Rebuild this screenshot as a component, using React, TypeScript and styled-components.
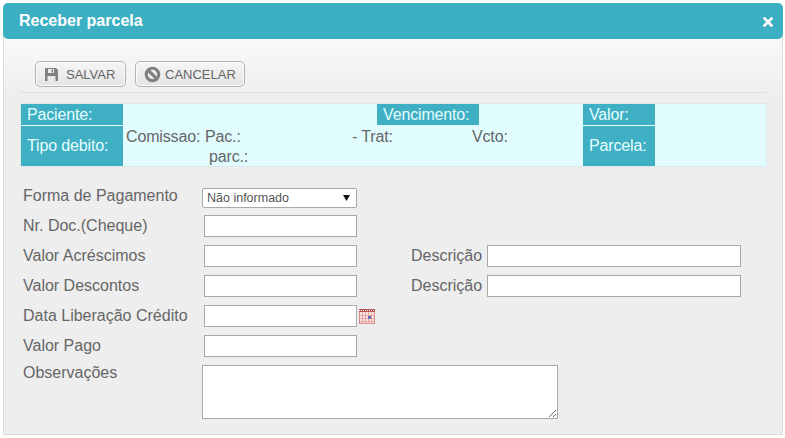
import React from "react";
import styled, { createGlobalStyle } from "styled-components";
import { Ban } from "lucide-react";

const Global = createGlobalStyle`
  html, body { margin: 0; padding: 0; background: #fff; }
  body { font-family: "Liberation Sans", Arial, sans-serif; }
`;

const Dialog = styled.div`
  width: 780px;
  height: 432px;
  margin: 3px 0 0 3px;
  display: flex;
  flex-direction: column;
  box-sizing: border-box;
`;
const Header = styled.div`
  height: 36px;
  flex: none;
  background: #3cb0c2;
  border-radius: 5px;
  display: flex;
  align-items: center;
  justify-content: space-between;
  padding: 0 5px 0 16px;
  color: #fff;
  position: relative;
  z-index: 1;
`;
const Title = styled.div`
  font-size: 16px;
  font-weight: bold;
`;
const Close = styled.svg`
  width: 10px;
  height: 10px;
  margin: 1px 5px 0 0;
`;
const Body = styled.div`
  flex: 1;
  margin-top: -2px;
  background: linear-gradient(#f9f9f9 0, #eeeeee 60px);
  border: 1px solid #dcdcdc;
  border-top: none;
  box-sizing: border-box;
  padding: 0 16px 0 16px;
  display: flex;
  flex-direction: column;
`;
const Toolbar = styled.div`
  margin-top: 24px;
  padding: 0 0 5px 15px;
  border-bottom: 1px solid #e0e0e0;
  display: flex;
  gap: 9px;
`;
const Btn = styled.button<{ $w: number; $gap: number }>`
  width: ${p => p.$w}px;
  height: 26px;
  box-sizing: border-box;
  border: 1px solid #b4b4b4;
  border-radius: 5px;
  background: linear-gradient(#f6f6f6, #e4e4e4);
  box-shadow: inset 0 0 0 1px #fafafa;
  color: #666;
  font: 13px "Liberation Sans", Arial, sans-serif;
  display: flex;
  align-items: center;
  gap: ${p => p.$gap}px;
  padding: 0 0 0 9px;
`;
const Info = styled.div`
  margin-top: 10px;
  width: 747px;
  box-sizing: border-box;
  background: #e0fcff;
  border: 1px solid #dfe8e9;
  display: grid;
  grid-template-columns: 102px 254px 102px 104px 72px 111px;
  grid-template-rows: 21px 40px;
  row-gap: 1px;
  font-size: 16px;
  letter-spacing: -0.15px;
`;
const Label = styled.div`
  background: #3fafc3;
  color: #e6fdff;
  display: flex;
  align-items: center;
  padding-left: 6px;
`;
const Empty = styled.div``;
const Commission = styled.div`
  grid-column: span 3;
  color: #666;
  padding: 1px 0 0 3px;
  line-height: 20px;
  display: grid;
  grid-template-columns: 79px 147px 120px 1fr;
  grid-auto-rows: 20px;
`;
const Pad = styled.span`
  padding-left: 4px;
`;
const Form = styled.div`
  margin-top: 14px;
  padding-left: 3px;
  display: grid;
  grid-template-columns: 179px 209px 76px 1fr;
  grid-template-rows: repeat(6, 30px) auto;
  color: #666;
  font-size: 16px;
`;
const FieldLabel = styled.div`
  height: 30px;
  display: flex;
  align-items: center;
`;
const TopLabel = styled.div`
  margin-top: 3px;
  line-height: 18px;
`;
const Cell = styled.div`
  height: 30px;
  display: flex;
  align-items: center;
  gap: 2px;
`;
const Input = styled.input<{ $w: number }>`
  width: ${p => p.$w}px;
  height: 22px;
  box-sizing: border-box;
  border: 1px solid #a9a9a9;
  background: #fff;
  margin-left: ${p => (p.$w === 153 ? "2px" : "0")};
  padding: 0;
`;
const Select = styled.div`
  width: 155px;
  height: 20px;
  margin-top: 3px;
  box-sizing: border-box;
  border: 1px solid #a9a9a9;
  border-radius: 2px;
  background: #fff;
  color: #555;
  font-size: 12.5px;
  display: flex;
  align-items: center;
  justify-content: space-between;
  padding: 0 6px 0 4px;
`;
const Caret = styled.svg`
  width: 7px;
  height: 6px;
`;
const Area = styled.textarea`
  width: 356px;
  height: 54px;
  box-sizing: border-box;
  border: 1px solid #a9a9a9;
  background: #fff;
  padding: 0;
  margin: 4px 0 0;
  display: block;
`;
const BanIcon = styled(Ban)`
  overflow: visible;
`;

const Save = () => (
  <svg width="13" height="13" viewBox="0 0 13 13">
    <path d="M0 0h11l2 2v11H0z" fill="#808080" />
    <rect x="3" y="1" width="6" height="4" fill="#eee" />
    <rect x="6.5" y="1.5" width="1.5" height="3" fill="#808080" />
    <rect x="2.5" y="8" width="8" height="5" fill="#e8e8e8" />
  </svg>
);

const Calendar = () => (
  <svg width="16" height="15" viewBox="0 0 16 15">
    <rect x="0.5" y="0.5" width="15" height="14" fill="#fbe4e0" stroke="#d08a86" />
    <rect x="0" y="0" width="16" height="3" fill="#b8524e" />
    <path d="M0 1.5h16" stroke="#fff" strokeDasharray="1 1" />
    <path d="M0.5 6.5h15M0.5 9.5h15M0.5 12.5h15M3.5 3v12M6.5 3v12M9.5 3v12M12.5 3v12" stroke="#e3a8a4" fill="none" />
    <rect x="9" y="7" width="3" height="3" fill="#5a6ab0" />
  </svg>
);

export default function App() {
  return (
    <>
      <Global />
      <Dialog>
        <Header>
          <Title>Receber parcela</Title>
          <Close viewBox="0 0 10 10">
            <path d="M1.5 1.5l7 7M8.5 1.5l-7 7" stroke="#fff" strokeWidth="2.6" strokeLinecap="square" />
          </Close>
        </Header>
        <Body>
          <Toolbar>
            <Btn $w={91} $gap={8}><Save />SALVAR</Btn>
            <Btn $w={110} $gap={5}><BanIcon size={15} strokeWidth={5} color="#808080" />CANCELAR</Btn>
          </Toolbar>
          <Info>
            <Label>Paciente:</Label>
            <Empty />
            <Label>Vencimento:</Label>
            <Empty />
            <Label>Valor:</Label>
            <Empty />
            <Label>Tipo debito:</Label>
            <Commission>
              <span>Comissao:</span>
              <span>Pac.:</span>
              <span>- Trat:</span>
              <span>Vcto:</span>
              <span />
              <Pad>parc.:</Pad>
            </Commission>
            <Label>Parcela:</Label>
            <Empty />
          </Info>
          <Form>
            <FieldLabel>Forma de Pagamento</FieldLabel>
            <Cell><Select>Não informado<Caret viewBox="0 0 7 6"><path d="M0 0h7L3.5 6z" fill="#111" /></Caret></Select></Cell>
            <Empty />
            <Empty />
            <FieldLabel>Nr. Doc.(Cheque)</FieldLabel>
            <Cell><Input $w={153} /></Cell>
            <Empty />
            <Empty />
            <FieldLabel>Valor Acréscimos</FieldLabel>
            <Cell><Input $w={153} /></Cell>
            <FieldLabel>Descrição</FieldLabel>
            <Cell><Input $w={254} /></Cell>
            <FieldLabel>Valor Descontos</FieldLabel>
            <Cell><Input $w={153} /></Cell>
            <FieldLabel>Descrição</FieldLabel>
            <Cell><Input $w={254} /></Cell>
            <FieldLabel>Data Liberação Crédito</FieldLabel>
            <Cell><Input $w={153} /><Calendar /></Cell>
            <Empty />
            <Empty />
            <FieldLabel>Valor Pago</FieldLabel>
            <Cell><Input $w={153} /></Cell>
            <Empty />
            <Empty />
            <TopLabel>Observações</TopLabel>
            <div><Area /></div>
          </Form>
        </Body>
      </Dialog>
    </>
  );
}
